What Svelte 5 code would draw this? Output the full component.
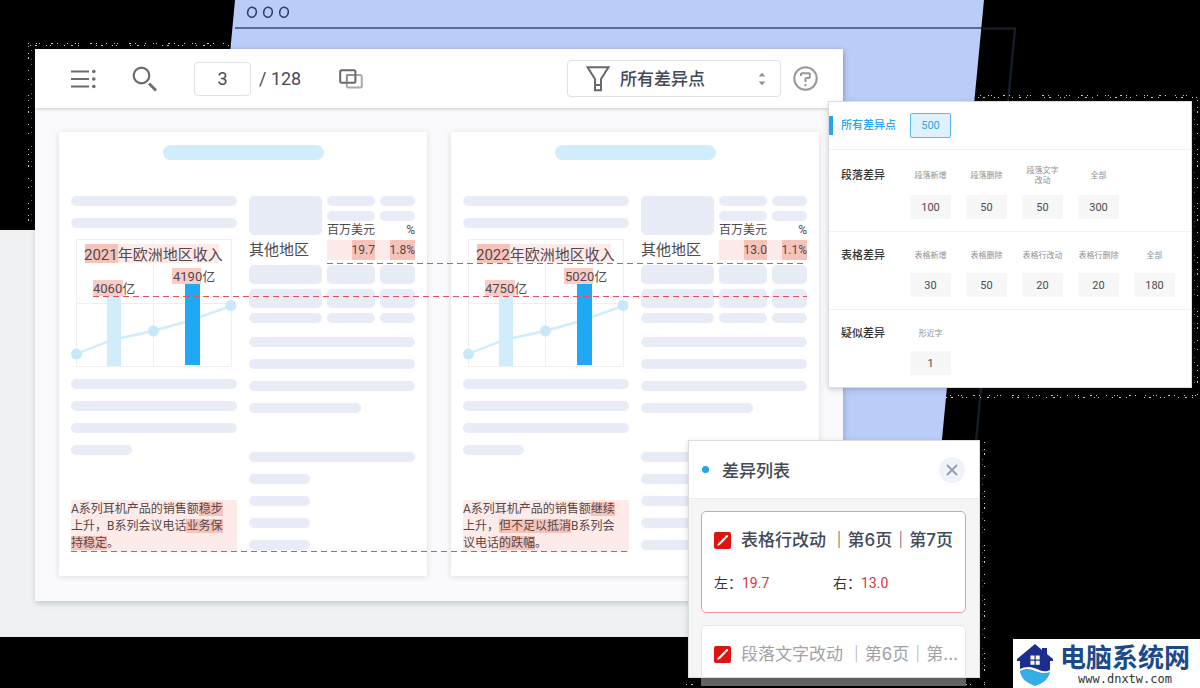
<script>
  let pagina = $state('3');
  let filtro = $state('all');

  // Both versions of the report share one layout, only the figures differ
  const documents = [
    {
      year: '2021',
      low: '4060',
      high: '4190',
      amount: '19.7',
      percent: '1.8%',
      note: [
        { text: 'A系列耳机产品的销售额' },
        { text: '稳步', changed: true },
        { text: '上升，B系列会议电话' },
        { text: '业务保持稳定', changed: true },
        { text: '。' }
      ]
    },
    {
      year: '2022',
      low: '4750',
      high: '5020',
      amount: '13.0',
      percent: '1.1%',
      note: [
        { text: 'A系列耳机产品的销售额' },
        { text: '继续', changed: true },
        { text: '上升，' },
        { text: '但不足以抵消', changed: true },
        { text: 'B系列会议电话' },
        { text: '的跌幅', changed: true },
        { text: '。' }
      ]
    }
  ];

  const groups = [
    {
      name: '段落差异',
      tall: true,
      items: [
        { label: '段落新增', count: 100 },
        { label: '段落删除', count: 50 },
        { label: '段落文字\n改动', count: 50 },
        { label: '全部', count: 300 }
      ]
    },
    {
      name: '表格差异',
      items: [
        { label: '表格新增', count: 30 },
        { label: '表格删除', count: 50 },
        { label: '表格行改动', count: 20 },
        { label: '表格行删除', count: 20 },
        { label: '全部', count: 180 }
      ]
    },
    {
      name: '疑似差异',
      items: [{ label: '形近字', count: 1 }]
    }
  ];
</script>

{#snippet editIcon()}
  <svg class="edit-icon" width="17" height="17" viewBox="0 0 17 17" aria-hidden="true">
    <rect width="17" height="17" rx="2" fill="#dc1414" />
    <path d="M5 12.2 11.2 6" stroke="#fff" stroke-width="2.2" />
    <path d="M11.8 5.3 13 4.1" stroke="#fff" stroke-width="2.2" stroke-linecap="round" />
    <path d="M3.4 13.7 4 11.3 5.9 13.1z" fill="#fff" />
  </svg>
{/snippet}

{#snippet lines(count, last)}
  <div class="lines">
    {#each Array(count) as _, i}
      <span class="bar" class:short={last === 'short' && i === count - 1} class:medium={last === 'medium' && i === count - 1}></span>
    {/each}
  </div>
{/snippet}

<div class="scene">
  <div class="floor"></div>
  <svg class="backdrop" viewBox="0 0 1200 688" fill="none" aria-hidden="true">
    <path d="M235 0H984L940 460H192z" fill="#b9cdf8" />
    <g stroke="#2c3d66" stroke-width="1.6">
      <ellipse cx="252" cy="12.3" rx="4.3" ry="5" transform="rotate(12 252 12.3)" />
      <ellipse cx="268" cy="12.3" rx="4.3" ry="5" transform="rotate(12 268 12.3)" />
      <ellipse cx="284" cy="12.3" rx="4.3" ry="5" transform="rotate(12 284 12.3)" />
    </g>
    <path d="M235 28H981" stroke="#3a4a78" stroke-width="1.6" />
    <path d="M981 28.5H1015L976 442" stroke="#151d29" stroke-width="2.4" />
    <g class="specks" stroke="#fff">
      <path d="M30 45.500H232M978 97.500H1197M946 397.500H1197M686 684.500H985" stroke-dasharray="1 4 2 9 1 3 1 13 1 6 2 5 1 17" />
      <path d="M28 43.500H232M980 95.500H1197M950 395.500H1197" stroke-dasharray="1 7 1 2 1 11 2 4 1 9" />
      <path d="M28.500 46V230M1197.500 100V396M984.500 442V684" stroke-dasharray="1 6 1 3 2 11 1 8 1 15 1 4" />
      <path d="M31.500 50V228M1194.500 110V390M982.500 450V680" stroke="#777" stroke-dasharray="1 8 1 4 1 13 1 5" />
    </g>
  </svg>

  <main class="window">
    <header class="toolbar">
      <button class="icon-btn" aria-label="目录">
        <svg width="26" height="24" viewBox="0 0 26 24" aria-hidden="true">
          <path d="M1 4.500H19M1 12H19M1 19.500H19" stroke="#6b6b6f" stroke-width="2.200" />
          <g fill="#6b6b6f">
            <circle cx="23.800" cy="4.500" r="1.800" />
            <circle cx="23.800" cy="12" r="1.800" />
            <circle cx="23.800" cy="19.500" r="1.800" />
          </g>
        </svg>
      </button>
      <button class="icon-btn" aria-label="搜索">
        <svg width="26" height="26" viewBox="0 0 26 26" fill="none" stroke="#6b6b6f" aria-hidden="true">
          <circle cx="9.500" cy="9.500" r="7.800" stroke-width="2.200" />
          <path d="M17 17.500 24 24.500" stroke-width="2.600" />
        </svg>
      </button>
      <div class="pager">
        <input aria-label="页码" bind:value={pagina} />
        <span>/ 128</span>
      </div>
      <button class="icon-btn" aria-label="对比">
        <svg width="24" height="20" viewBox="0 0 24 20" fill="none" aria-hidden="true">
          <rect x="7.800" y="6" width="15" height="12.600" rx="1.500" stroke="#a9a9ac" stroke-width="2" />
          <rect x="1.200" y="1.200" width="15.200" height="12.600" rx="1.500" stroke="#68686c" stroke-width="2" />
          <path d="M7.800 13.800V6H16.400" stroke="#8c8c90" stroke-width="1.600" />
        </svg>
      </button>
      <label class="filter">
        <svg width="24" height="26" viewBox="0 0 24 26" fill="none" stroke="#68686c" stroke-width="2" aria-hidden="true">
          <path d="M1.500 1.300H22.500L15 13V24.200H9V13z" />
          <path d="M9 19H15" />
        </svg>
        <select aria-label="差异类型" bind:value={filtro}>
          <option value="all">所有差异点</option>
          {#each groups as group}
            <option value={group.name}>{group.name}</option>
          {/each}
        </select>
        <svg width="8" height="14" viewBox="0 0 8 14" fill="#8f8f93" aria-hidden="true">
          <path d="M4 0.800 7.300 4.500H0.700zM4 13.200 7.300 9.500H0.700z" />
        </svg>
      </label>
      <button class="icon-btn help" aria-label="帮助">
        <svg width="25" height="25" viewBox="0 0 25 25" fill="none" stroke="#98989c" stroke-width="2" aria-hidden="true">
          <circle cx="12.500" cy="12.500" r="11.200" />
          <path d="M8 10V8Q8 7.300 8.700 7.300H16Q16.800 7.300 16.800 8V11.300Q16.800 12 16 12H13.300Q12.500 12 12.500 12.800V16" />
          <path d="M12.500 18V20.200" />
        </svg>
      </button>
    </header>

    <section class="workspace">
      {#each documents as doc}
        <article class="page">
          <span class="heading"></span>
          <div class="columns">
            <div class="left">
              {@render lines(2)}
              <svg class="chart" viewBox="0 0 166 135">
                <path d="M5.500 4.500H160.500V131.500H5.500zM82.500 4V131M5 68.500H160" fill="none" stroke="#f0f0f2" />
                <rect x="14" y="9" width="33" height="19" fill="#f6c3bb" />
                <rect x="47" y="9" width="101" height="19" fill="#fdebe9" />
                <rect x="22" y="45" width="30" height="16" fill="#f8cdc7" />
                <rect x="101" y="33" width="29" height="16" fill="#f8cdc7" />
                <path d="M5 119 36 107 50 103 82 96 114 87 129 82 160 71" fill="none" stroke="#d1edfc" stroke-width="2.400" />
                <rect x="36" y="61" width="14" height="70" fill="#d1edfc" />
                <rect x="114" y="49" width="15" height="81" fill="#1fa9f5" />
                <g fill="#c9e9fb">
                  <circle cx="5.500" cy="119" r="5.500" />
                  <circle cx="82.500" cy="96" r="5.500" />
                  <circle cx="160" cy="70.500" r="5.500" />
                </g>
                <text class="chart-title" x="13" y="25">{doc.year}年欧洲地区收入</text>
                <text x="22" y="58">{doc.low}亿</text>
                <text x="102" y="46">{doc.high}亿</text>
              </svg>
              {@render lines(4, 'short')}
              <p class="note">
                {#each doc.note as part}{#if part.changed}<mark>{part.text}</mark>{:else}{part.text}{/if}{/each}
              </p>
            </div>
            <div class="right">
              <table>
                <colgroup>
                  <col class="c1" />
                  <col class="c2" />
                  <col class="c3" />
                </colgroup>
                <tbody>
                  <tr class="r1">
                    <td rowspan="3"><span class="block head"></span></td>
                    <td><span class="bar"></span></td>
                    <td><span class="bar"></span></td>
                  </tr>
                  <tr class="r2">
                    <td><span class="bar"></span></td>
                    <td><span class="bar"></span></td>
                  </tr>
                  <tr class="r3">
                    <th>百万美元</th>
                    <th class="end">%</th>
                  </tr>
                  <tr class="r4">
                    <th>其他地区</th>
                    <td><div class="value"><mark>{doc.amount}</mark></div></td>
                    <td class="tint"><div class="value"><mark>{doc.percent}</mark></div></td>
                  </tr>
                  {#each ['block', 'block', 'bar'] as kind}
                    <tr class="filler">
                      <td><span class={kind}></span></td>
                      <td><span class={kind}></span></td>
                      <td><span class={kind}></span></td>
                    </tr>
                  {/each}
                </tbody>
              </table>
              {@render lines(4, 'medium')}
              <div class="lines tail">
                <span class="bar"></span>
                <span class="bar short"></span>
                <span class="bar short"></span>
                <span class="bar short"></span>
                <span class="bar short"></span>
              </div>
            </div>
          </div>
        </article>
      {/each}
      <span class="link link-table"></span>
      <span class="link link-chart"></span>
      <span class="link link-note"></span>
    </section>
  </main>

  <aside class="stats">
    <div class="row total">
      <span class="row-name">所有差异点</span>
      <button class="count active">500</button>
    </div>
    {#each groups as group}
      <div class="row" class:tall={group.tall}>
        <span class="row-name">{group.name}</span>
        {#each group.items as item}
          <div class="stat">
            <span class="caption">{item.label}</span>
            <button class="count">{item.count}</button>
          </div>
        {/each}
      </div>
    {/each}
  </aside>

  <div class="diff">
    <section class="diff-panel">
      <header class="diff-head">
        <span class="dot"></span>
        <h2>差异列表</h2>
        <button class="close" aria-label="关闭">
          <svg width="12" height="12" viewBox="0 0 12 12" aria-hidden="true">
            <path d="M1 1 11 11M11 1 1 11" stroke="#8e9db3" stroke-width="1.800" />
          </svg>
        </button>
      </header>
      <div class="diff-body">
        <div class="card selected">
          <div class="card-title">
            {@render editIcon()}
            <h3>表格行改动 ｜第6页｜第7页</h3>
          </div>
          <div class="card-values">
            <span>左：<b>19.7</b></span>
            <span>右：<b>13.0</b></span>
          </div>
        </div>
        <div class="card muted">
          <div class="card-title">
            {@render editIcon()}
            <h3>段落文字改动 ｜第6页｜第...</h3>
          </div>
        </div>
      </div>
    </section>
    <div class="card-shadow"></div>
  </div>

  <footer class="brand">
    <svg width="38" height="43" viewBox="0 0 38 43" aria-hidden="true">
      <path d="M19 1 26 7V5H31V11L37 16V18H34V27C28 30 24 27 18 25 13 23 8 24 4 26V18H1V16z" fill="#1c2f8f" />
      <path d="M4 28C10 25 15 26 19 28 25 30 29 31 34 29 33 36 26 41 19 43 11 40 5 36 4 28z" fill="#35aee8" />
      <path d="M14.500 12.500H18.500V16.500H14.500zM19.700 12.500H23.700V16.500H19.700zM14.500 17.700H18.500V21.700H14.500zM19.700 17.700H23.700V21.700H19.700z" fill="#fff" />
    </svg>
    <div>
      <strong>电脑系统网</strong>
      <small>www.dnxtw.com</small>
    </div>
  </footer>
</div>

<style>
  :global(body) {
    margin: 0;
    background: #000;
  }

  .scene {
    position: relative;
    box-sizing: border-box;
    min-height: 100vh;
    padding: 49px 357px 88px 35px;
    overflow: hidden;
    background: #000;
    color: #4b4b4f;
    font-family: Roboto, "Noto Sans CJK SC", sans-serif;
    font-size: 12px;
  }

  button,
  input,
  select {
    font-family: inherit;
    color: inherit;
    padding: 0;
    margin: 0;
    border: none;
    background: none;
  }

  svg {
    display: block;
    flex: none;
  }

  .floor {
    position: absolute;
    top: 230px;
    left: 0;
    right: 400px;
    height: 407px;
    background: #eff1f3;
  }

  .backdrop {
    position: absolute;
    top: 0;
    left: 0;
    width: 100%;
  }

  .specks {
    opacity: 0.8;
  }

  .window {
    position: relative;
    background: #fafafc;
    box-shadow: 1px 2px 6px rgba(60, 64, 80, 0.25);
  }

  /* toolbar */
  .toolbar {
    position: relative;
    display: flex;
    align-items: center;
    gap: 36px;
    height: 59px;
    padding: 0 25px 0 35px;
    background: #fff;
    box-shadow: 0 1px 3px rgba(60, 60, 80, 0.25);
  }

  .icon-btn {
    cursor: pointer;
  }

  .pager {
    display: flex;
    align-items: center;
    gap: 8px;
    font-size: 18px;
    margin-right: 2px;
  }

  .pager input {
    box-sizing: border-box;
    width: 57px;
    height: 34px;
    border: 1px solid #dfe1ea;
    border-radius: 4px;
    text-align: center;
    font-size: 18px;
  }

  .filter {
    display: flex;
    align-items: center;
    gap: 10px;
    box-sizing: border-box;
    width: 214px;
    height: 37px;
    margin-left: auto;
    padding: 0 14px 0 18px;
    border: 1px solid #dfe1e8;
    border-radius: 4px;
  }

  .filter select {
    flex: 1;
    appearance: none;
    font-size: 17px;
    font-weight: 500;
    color: #434956;
    outline: none;
  }

  .help {
    margin-left: -24px;
  }

  /* documents */
  .workspace {
    position: relative;
    display: flex;
    gap: 24px;
    padding: 24px 24px 25px;
  }

  .page {
    flex: 1;
    padding: 13px 12px 24px;
    background: #fff;
    box-shadow: 0 1px 6px rgba(60, 64, 90, 0.16);
  }

  .heading {
    display: block;
    width: 161px;
    height: 15px;
    margin: 0 auto 36px;
    border-radius: 8px;
    background: #d1edfc;
  }

  .columns {
    display: grid;
    grid-template-columns: 1fr 1fr;
    gap: 12px;
  }

  .lines {
    display: grid;
    gap: 12px;
  }

  .bar,
  .block {
    display: block;
    height: 10px;
    border-radius: 5px;
    background: #e8ecf6;
  }

  .block {
    height: 19px;
  }

  .block.head {
    height: 39px;
  }

  .short {
    width: 61px;
  }

  .medium {
    width: 112px;
  }

  .chart {
    width: 100%;
    margin: 7px 0 9px;
  }

  .chart text {
    font-size: 13px;
    fill: #55494b;
  }

  .chart .chart-title {
    font-size: 15px;
  }

  mark {
    background: #f6c3bb;
    color: inherit;
  }

  .note {
    margin: 45px 0 0;
    padding: 1px 8px 0 0;
    background: #fdebe9;
    line-height: 17px;
    color: #55494b;
  }

  table {
    width: 100%;
    margin-bottom: 14px;
    border-collapse: collapse;
    table-layout: fixed;
  }

  .c1 {
    width: 73px;
  }

  .c3 {
    width: 40px;
  }

  td,
  th {
    padding: 0 0 0 5px;
    text-align: left;
    vertical-align: top;
    font-weight: 400;
    white-space: nowrap;
  }

  td:first-child:not(.r2 td),
  .r4 th {
    padding-left: 0;
  }

  .r1 {
    height: 15px;
  }

  .r2 {
    height: 11px;
  }

  .r3 {
    height: 18px;
    line-height: 16px;
  }

  .r4 {
    height: 20px;
    line-height: 20px;
  }

  .r4 th {
    font-size: 15px;
  }

  .end {
    text-align: right;
  }

  .tint,
  .value {
    background: #fdebe9;
  }

  .value {
    display: flex;
    justify-content: flex-end;
  }

  .filler td {
    padding-top: 5px;
  }

  .tail {
    margin-top: 39px;
  }

  /* connectors drawn over both pages */
  .link {
    position: absolute;
    right: 36px;
    height: 1px;
    background: repeating-linear-gradient(90deg, #e5505c 0 6px, transparent 6px 10px);
  }

  .link-table {
    top: 155px;
    left: 292px;
  }

  .link-chart {
    top: 188px;
    left: 58px;
  }

  .link-note {
    top: 443px;
    left: 36px;
    right: 215px;
  }

  /* statistics */
  .stats {
    position: absolute;
    top: 102px;
    right: 9px;
    width: 362px;
    background: #fff;
    box-shadow: 0 0 0 1px #dcdde0, 0 2px 6px rgba(60, 64, 80, 0.3);
  }

  .row {
    display: flex;
    gap: 15px;
    padding: 14px 12px 12px;
    border-bottom: 1px solid #f2f2f4;
  }

  .row:last-child {
    border-bottom: none;
  }

  .row.tall {
    padding-top: 16px;
  }

  .row-name {
    width: 54px;
    font-size: 11px;
    font-weight: 500;
    line-height: 20px;
    color: #333;
    white-space: nowrap;
  }

  .row.total {
    align-items: center;
    padding: 11px 12px;
  }

  .total::before {
    content: "";
    width: 4px;
    height: 19px;
    margin: 0 -7px 0 -12px;
    background: #27a6ee;
  }

  .total .row-name {
    color: #27a6ee;
  }

  .stat {
    display: flex;
    flex-direction: column;
    align-items: center;
    gap: 7px;
    width: 41px;
  }

  .tall .stat {
    gap: 9px;
  }

  .caption {
    display: flex;
    align-items: center;
    height: 20px;
    font-size: 8px;
    line-height: 10px;
    color: #909094;
    text-align: center;
    white-space: pre;
  }

  .count {
    width: 41px;
    height: 24px;
    border-radius: 1px;
    background: #f7f7f8;
    font-size: 11px;
    cursor: pointer;
  }

  .count.active {
    height: 25px;
    border: 1px solid #5bb9ee;
    border-radius: 2px;
    background: #dff1fc;
    color: #35a4e4;
  }

  /* difference list */
  .diff {
    position: absolute;
    top: 441px;
    right: 221px;
    width: 290px;
  }

  .diff-panel {
    position: relative;
    height: 236px;
    overflow: hidden;
    background: #f5f5f6;
    box-shadow: 0 0 0 1px #dcdde0, 0 2px 6px rgba(60, 64, 80, 0.3);
  }

  .diff-head {
    display: flex;
    align-items: center;
    gap: 13px;
    height: 57px;
    padding: 0 14px 0 13px;
    background: #fff;
    border-bottom: 1px solid #ececee;
  }

  .dot {
    width: 7px;
    height: 7px;
    border-radius: 50%;
    background: #1fa4ea;
  }

  h2,
  h3 {
    margin: 0;
    font-size: 17px;
    font-weight: 500;
    color: #434956;
  }

  .close {
    display: grid;
    place-items: center;
    width: 26px;
    height: 26px;
    margin-left: auto;
    border-radius: 50%;
    background: #eff3f9;
    cursor: pointer;
  }

  .diff-body {
    display: grid;
    gap: 12px;
    padding: 12px 13px 0 12px;
  }

  .card {
    box-sizing: border-box;
    height: 102px;
    min-width: 0;
    padding: 16px 5px 0 12px;
    border: 1px solid #e6e6e9;
    border-radius: 5px;
    background: #fff;
  }

  .card.selected {
    border-color: #ef9a9a;
  }

  .card-title {
    display: flex;
    align-items: center;
    gap: 10px;
    height: 24px;
  }

  .card-title h3 {
    font-family: Inter, "Noto Sans CJK SC", sans-serif;
    line-height: 24px;
    white-space: nowrap;
  }

  .card-values {
    display: grid;
    grid-template-columns: 119px 1fr;
    margin-top: 21px;
    font-size: 14px;
    line-height: 20px;
    color: #333;
  }

  .card-values b {
    font-weight: 400;
    color: #d9363e;
  }

  .muted h3 {
    font-weight: 400;
    color: #a2a2a6;
  }

  .card-shadow {
    height: 9px;
    margin: 0 13px 0 12px;
    background: #666;
  }

  .brand {
    position: absolute;
    right: 0;
    bottom: 0;
    display: flex;
    gap: 6px;
    box-sizing: border-box;
    width: 187px;
    height: 50px;
    padding: 4px 3px;
    background: #fff;
  }

  .brand strong,
  .brand small {
    display: block;
    white-space: nowrap;
  }

  .brand strong {
    font-size: 26px;
    line-height: 30px;
    color: #1b4a8a;
  }

  .brand small {
    font-family: "DejaVu Sans Mono", monospace;
    font-size: 12px;
    line-height: 12px;
    text-align: center;
    color: #333;
  }
</style>
